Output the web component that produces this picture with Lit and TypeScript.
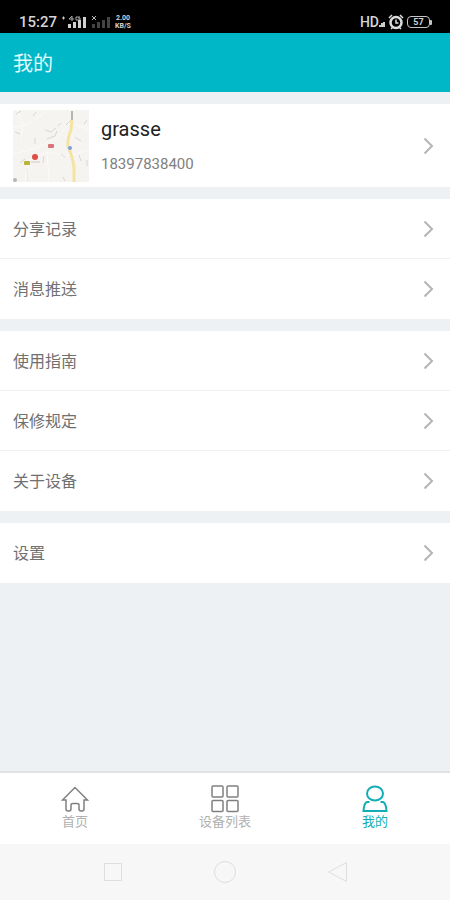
import { LitElement, html, css, svg } from "lit";
import { customElement, state } from "lit/decorators.js";
import { classMap } from "lit/directives/class-map.js";

const groups = [
  ["分享记录", "消息推送"],
  ["使用指南", "保修规定", "关于设备"],
  ["设置"],
];

const homeIcon = svg`<path d="M14 2.500 L1.500 15 H5 V24 Q5 26 7 26 H8 Q10 26 10 24 V20 Q10 18.500 12 18.500 H16 Q18 18.500 18 20 V24 Q18 26 20 26 H21 Q23 26 23 24 V15 H26.500 Z"/>`;
const gridIcon = svg`
  <rect x="1" y="1" width="11" height="11" rx="1"/><rect x="16" y="1" width="11" height="11" rx="1"/>
  <rect x="1" y="15.500" width="11" height="11" rx="1"/><rect x="16" y="15.500" width="11" height="11" rx="1"/>`;
const userIcon = svg`
  <ellipse cx="14" cy="8.500" rx="8" ry="7"/>
  <path d="M8.500 17 H6 Q3 18 2.500 26 H25.500 Q25 18 22 17 H19.500"/>`;

const tabs = [
  { id: "home", label: "首页", icon: homeIcon },
  { id: "devices", label: "设备列表", icon: gridIcon },
  { id: "mine", label: "我的", icon: userIcon },
];

const chevron = html`<svg class="chevron" viewBox="0 0 12 18" aria-hidden="true"><path d="M2.500 1.500 L10 9 L2.500 16.500"/></svg>`;

@customElement("status-bar")
class StatusBar extends LitElement {
  static styles = css`
    :host {
      display: flex;
      align-items: flex-end;
      justify-content: space-between;
      box-sizing: border-box;
      height: 33px;
      padding: 0 18px 3px 19px;
      background: #000;
      color: #d4d4d4;
      font-family: Roboto, "Noto Sans CJK SC", sans-serif;
    }
    .side { display: flex; align-items: center; height: 16px; }
    .time { font-size: 15px; line-height: 16px; font-weight: 500; }
    .signals { width: 50px; height: 14px; margin-left: 5px; }
    .speed {
      display: flex;
      flex-direction: column;
      margin-left: 3px;
      font-size: 7px;
      line-height: 8px;
      font-weight: 700;
      text-align: center;
    }
    .hd { font-size: 14px; line-height: 16px; font-weight: 500; }
    .small-signal { width: 6px; height: 14px; }
    .alarm { width: 16px; height: 16px; margin: 0 3px; }
    .battery { display: flex; align-items: center; }
    .cell {
      box-sizing: border-box;
      width: 23px;
      height: 12px;
      border: 1px solid #c4c4c4;
      border-radius: 4px;
      font-size: 9px;
      line-height: 10px;
      font-weight: 700;
      text-align: center;
    }
    .cap { width: 2px; height: 5px; background: #c4c4c4; border-radius: 0 1px 1px 0; }
  `;

  render() {
    return html`
      <div class="side">
        <span class="time">15:27</span>
        <svg class="signals" viewBox="0 0 50 14" aria-hidden="true">
          <path d="M0 3h3M1.500 1.500v3" stroke="#ccc"/>
          <path d="M10 1L7 4h5M10 1v5M18 2h-4v3h4v-2h-2" fill="none" stroke="#aaa"/>
          <path d="M6 9h3v4h-3zM11 7h3v6h-3zM16 5h3v8h-3zM21 2h3v11h-3z" fill="#d0d0d0"/>
          <path d="M30 1l4 4M34 1l-4 4" stroke="#bbb"/>
          <path d="M30 9h3v4h-3zM35 7h3v6h-3zM40 5h3v8h-3zM45 2h3v11h-3z" fill="#444"/>
        </svg>
        <span class="speed"><span>2.00</span><span>KB/S</span></span>
      </div>
      <div class="side">
        <span class="hd">HD</span>
        <svg class="small-signal" viewBox="0 0 6 14" aria-hidden="true"><path d="M0 12V10h2V8h2V7h2v5z" fill="#ccc"/></svg>
        <svg class="alarm" viewBox="0 0 16 16" aria-hidden="true">
          <circle cx="8" cy="8.500" r="5.500" fill="none" stroke="#ddd" stroke-width="2.500"/>
          <path d="M8 5.500v3.500h2.500M1 4l3-3M15 4l-3-3M3 15l2-2M13 15l-2-2" fill="none" stroke="#ddd" stroke-width="1.500"/>
        </svg>
        <span class="battery"><span class="cell">57</span><span class="cap"></span></span>
      </div>`;
  }
}

@customElement("map-thumb")
class MapThumb extends LitElement {
  static styles = css`
    :host { display: block; width: 76px; height: 72px; }
    svg { display: block; width: 100%; height: 100%; }
  `;

  render() {
    return html`
      <svg viewBox="0 0 76 72" role="img" aria-label="地图">
        <rect width="76" height="72" fill="#f6f4f0"/>
        <path d="M0 18L14 14 28 6 34 0M0 44L16 40 32 34 46 26 58 12M12 72L16 50 34 42 54 46 76 40M34 42L36 72M62 14L76 20M4 0L10 14 8 30" fill="none" stroke="#fbfaf8"/>
        <path d="M3 4l5-3M20 6l3-4M32 20l6 2 5-4M45 16l3-3M34 29l8-3 2-5M22 28v6M31 46l-1 7M2 22l5 2M7 53l5-4M48 44l4 3M66 45l2 6M71 14l3-4M74 50v6M50 67l2 4M58 10l-5 5M62 27l6 4" fill="none" stroke="#d8d7d5"/>
        <path d="M59 10L58 20Q54 30 55 36Q60 48 61 58V72" fill="none" stroke="#f5e3a2" stroke-width="3"/>
        <path d="M59 1v9" stroke="#b4b4b4" stroke-width="2"/>
        <path d="M14 58L15 72" stroke="#f5e6dd"/>
        <rect x="35" y="34" width="6" height="4" rx="1" fill="#d9727a"/>
        <rect x="11" y="51" width="6" height="4" rx="1" fill="#b9b532"/>
        <circle cx="22" cy="47" r="3" fill="#df4d45"/>
        <path d="M18 52h9" stroke="#d5c9c6"/>
        <circle cx="57" cy="38" r="2" fill="#7d9fe0"/>
        <circle cx="2" cy="70" r="2" fill="#b5b5b5"/>
      </svg>`;
  }
}

@customElement("app-root")
class AppRoot extends LitElement {
  static styles = css`
    :host {
      display: flex;
      flex-direction: column;
      min-height: 100vh;
      background: #edf1f4;
      color: #707070;
      font-family: Roboto, "Noto Sans CJK SC", sans-serif;
    }
    button {
      margin: 0;
      border: 0;
      background: none;
      color: inherit;
      font-family: inherit;
      cursor: pointer;
    }
    header { padding: 16px 13px 13px; background: #00b7c7; color: #e2fbfc; }
    h1 { margin: 0; font-size: 20px; line-height: 30px; font-weight: 400; }
    main { display: flex; flex-direction: column; gap: 12px; flex: 1; padding: 12px 0; }
    .profile, .row {
      display: flex;
      align-items: center;
      box-sizing: border-box;
      width: 100%;
      padding: 0 16px 0 13px;
      background: #fff;
      text-align: left;
    }
    .profile { height: 83px; gap: 12px; }
    .who { display: flex; flex-direction: column; flex: 1; gap: 13px; }
    .name { color: #222; font-size: 20px; line-height: 24px; }
    .phone { color: #808080; font-size: 15px; line-height: 20px; }
    ul { margin: 0; padding: 0; list-style: none; }
    .row { height: 60px; justify-content: space-between; font-size: 16px; line-height: 24px; }
    .row span { padding-top: 2px; }
    li:not(:last-child) .row { border-bottom: 1px solid #eff0f1; }
    .chevron { width: 12px; height: 18px; fill: none; stroke: #b5b5b5; stroke-width: 2; }
    .tabs { display: flex; border-top: 2px solid #dfe3e5; background: #fff; }
    .tab {
      display: flex;
      flex: 1;
      flex-direction: column;
      align-items: center;
      gap: 1px;
      height: 71px;
      padding: 12px 0 0;
      color: #b0b0b0;
      font-size: 13px;
      line-height: 16px;
    }
    .tab svg { width: 28px; height: 28px; fill: none; stroke: #808080; stroke-width: 1.5; }
    .tab.active { color: #12adb5; }
    .tab.active svg { stroke: #12adb5; stroke-width: 2; }
    .system {
      display: grid;
      grid-template-columns: repeat(3, 1fr);
      place-items: center;
      height: 56px;
      padding: 0 12.5%;
      background: #f7f7f7;
    }
    .system button { display: flex; padding: 0; }
    .system svg { width: 24px; height: 24px; fill: none; stroke: #dedede; }
  `;

  @state() private active = "mine";

  render() {
    return html`
      <status-bar></status-bar>
      <header><h1>我的</h1></header>
      <main>
        <button class="profile">
          <map-thumb></map-thumb>
          <span class="who"><span class="name">grasse</span><span class="phone">18397838400</span></span>
          ${chevron}
        </button>
        ${groups.map((rows) => html`
          <ul>
            ${rows.map((label) => html`<li><button class="row"><span>${label}</span>${chevron}</button></li>`)}
          </ul>`)}
      </main>
      <nav class="tabs">
        ${tabs.map((t) => html`
          <button class=${classMap({ tab: true, active: this.active === t.id })} @click=${() => (this.active = t.id)}>
            <svg viewBox="0 0 28 28" aria-hidden="true">${t.icon}</svg>
            <span>${t.label}</span>
          </button>`)}
      </nav>
      <div class="system">
        <button aria-label="最近任务"><svg viewBox="0 0 24 24"><rect x="3.500" y="3.500" width="17" height="17"/></svg></button>
        <button aria-label="主屏幕"><svg viewBox="0 0 24 24"><circle cx="12" cy="12" r="10.500"/></svg></button>
        <button aria-label="返回"><svg viewBox="0 0 24 24"><path d="M20.500 2.500V21.500L2.500 12Z"/></svg></button>
      </div>`;
  }
}
